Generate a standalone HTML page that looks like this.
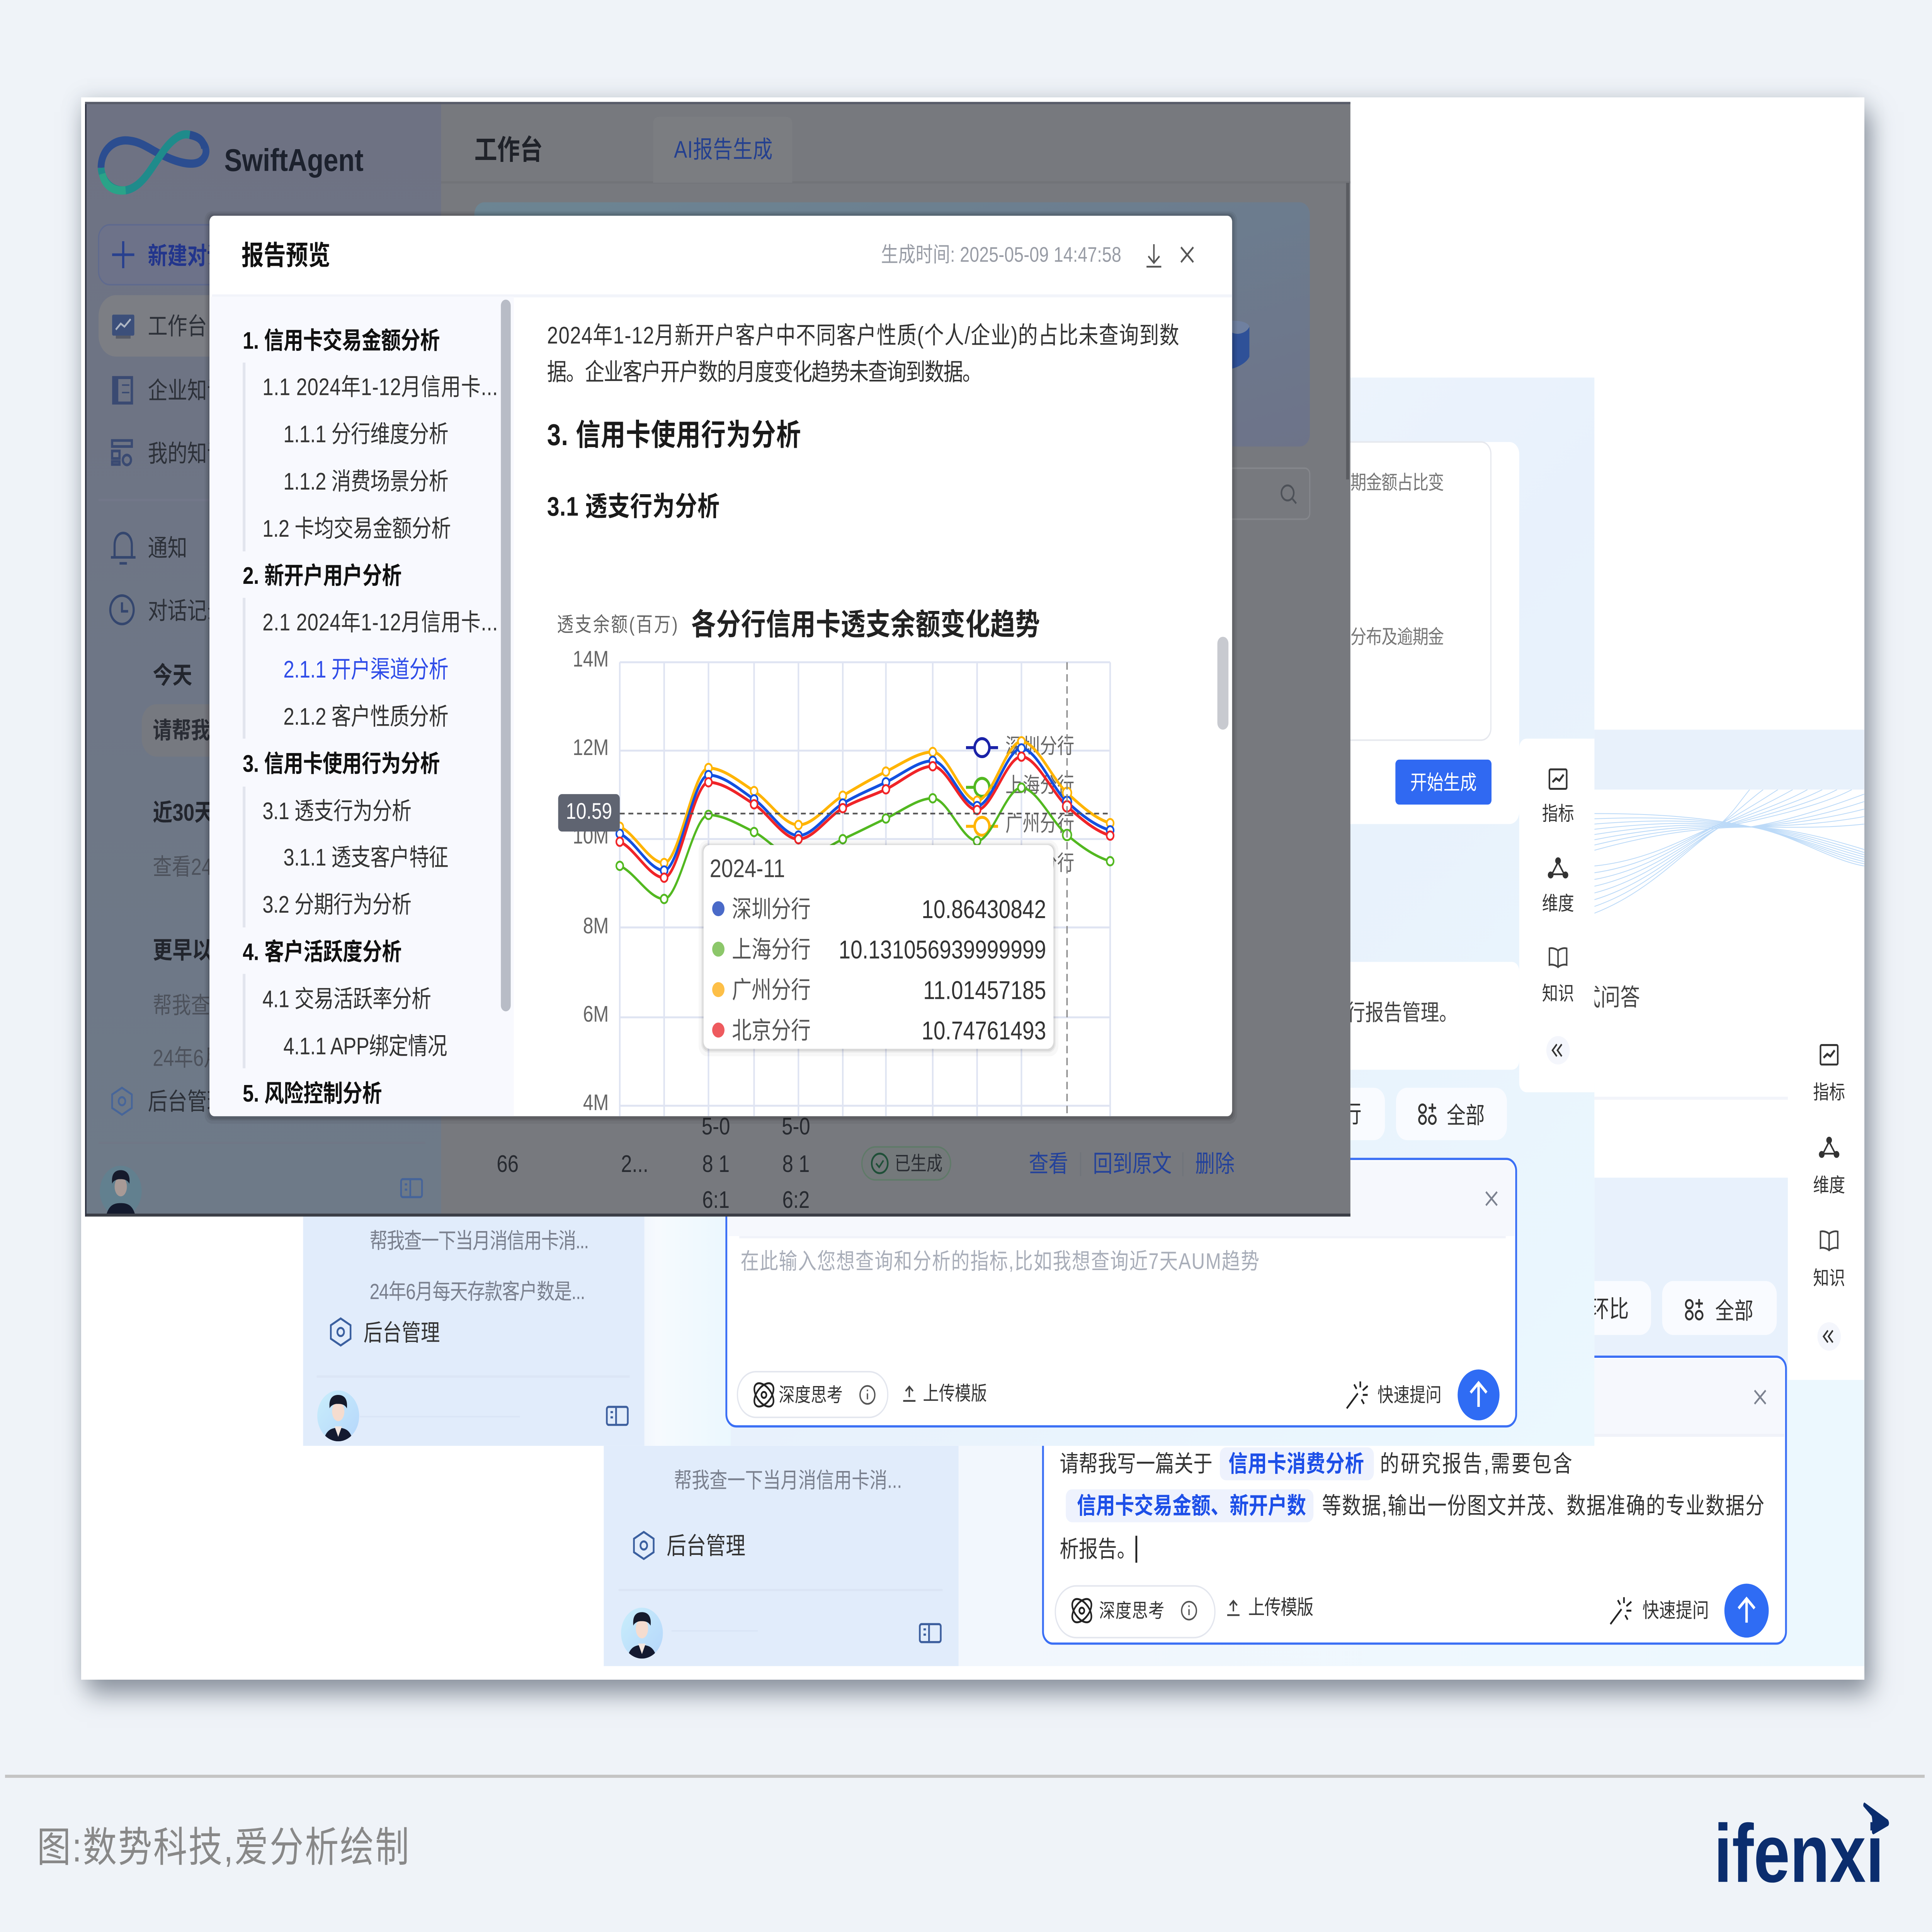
<!DOCTYPE html>
<html><head><meta charset="utf-8"><title>报告预览</title>
<style>
html,body{margin:0;padding:0;width:100%;height:100%;overflow:hidden;background:#eff3f8}
svg{display:block;position:absolute;left:0;top:0;width:100vw;height:100vh}
#card{position:absolute;left:4.209vw;top:5.041vh;width:92.283vw;height:81.894vh;background:#fff;box-shadow:.32vw .78vh 1.15vw rgba(90,100,115,.62),0 0 .9vw rgba(120,130,145,.25)}
#line{position:absolute;left:.255vw;width:99.36vw;top:91.86vh;height:.155vh;background:#c4c4c4}
#foot{top:91.5vh;height:8.5vh}
text{font-family:"Liberation Sans","Noto Sans CJK SC",sans-serif;dominant-baseline:central}
.b{font-weight:700}
</style></head><body>
<div id="card"></div>
<svg xmlns="http://www.w3.org/2000/svg" viewBox="0 0 1568 1289.48" preserveAspectRatio="none">
<defs>
<linearGradient id="m2" x1="0" y1="0" x2="1" y2="1"><stop offset="0" stop-color="#f4f8fe"/><stop offset=".55" stop-color="#e8f1fc"/><stop offset="1" stop-color="#ebf8fe"/></linearGradient>
<linearGradient id="m2b" x1="0" y1="0" x2="1" y2="0"><stop offset="0" stop-color="#f2f7fd"/><stop offset=".15" stop-color="#f6fafe"/><stop offset="1" stop-color="#ebf8fe"/></linearGradient>
<linearGradient id="m3" x1="0" y1="0" x2="1" y2="0"><stop offset="0" stop-color="#f2f7fd"/><stop offset="1" stop-color="#ecf8fe"/></linearGradient>
<linearGradient id="sb1" x1="0" y1="0" x2="0" y2="1"><stop offset="0" stop-color="#6e7283"/><stop offset="1" stop-color="#6e7a88"/></linearGradient>
<linearGradient id="hero" x1="0" y1="0" x2="1" y2="1"><stop offset="0" stop-color="#6c8593"/><stop offset="1" stop-color="#6d7389"/></linearGradient>
<linearGradient id="avg" x1="0" y1="0" x2="1" y2="1"><stop offset="0" stop-color="#c9eefb"/><stop offset="1" stop-color="#b5d6fb"/></linearGradient>
<clipPath id="c1"><rect x="69" y="68" width="1027" height="744"/></clipPath>
<clipPath id="wv"><rect x="1294" y="527" width="219" height="95"/></clipPath>
<clipPath id="mod"><rect x="170" y="144" width="830" height="601" rx="4"/></clipPath>
<clipPath id="avc"><circle r="17"/></clipPath>
<g id="av"><circle r="17" fill="url(#avg)"/><g clip-path="url(#avc)"><path d="M-12 17C-10 9-5 8 0 8C5 8 10 9 12 17Z" fill="#141a30"/><path d="M-3 7L0 14L3 7Z" fill="#f3e6df"/><ellipse cx="0" cy="-3" rx="5" ry="6.5" fill="#f5dccf"/><path d="M-7-5C-8-13-3-14 0-14C4-14 8-12 7-5C5-8 2-8-1-8C-3-8-6-7-7-5Z" fill="#151a2b"/></g></g>
<g id="hex" fill="none" stroke="#3a5f9f" stroke-width="1.4"><path d="M0-9L8-4.5V4.5L0 9L-8 4.5V-4.5Z"/><circle r="2.7"/></g>
<g id="bk" fill="none" stroke="#3d5f9e" stroke-width="1.4"><rect x="-8.5" y="-6" width="17" height="12" rx="1.5"/><path d="M-1-6V6M-5.5-2.5H-3.5M-5.5 1H-3.5"/></g>
<g id="ic1" fill="none" stroke="#333" stroke-width="1.3"><rect x="-7" y="-6.5" width="14" height="13" rx="1"/><path d="M-4.5 2L-1.5-.5L1 1L4.5-3" stroke-width="1.5"/></g>
<g id="ic2" fill="none" stroke="#333" stroke-width="1.2"><path d="M0-4L-5 4H5Z"/><circle cx="0" cy="-5" r="1.7" fill="#333"/><circle cx="-6" cy="4.5" r="1.7" fill="#333"/><circle cx="6" cy="4.5" r="1.7" fill="#333"/></g>
<g id="ic3" fill="none" stroke="#444" stroke-width="1.2"><path d="M0-4.5C-2-6-5-6.5-7-6V5C-5 4.5-2 5 0 6.5C2 5 5 4.5 7 5V-6C5-6.5 2-6 0-4.5V6.5"/></g>
<g id="ic4"><circle r="9.5" fill="#f4f6fc"/><path d="M-1-4L-4.5 0L-1 4M3-4L-.5 0L3 4" fill="none" stroke="#333" stroke-width="1.2"/></g>
<g id="atom" fill="none" stroke="#222" stroke-width="1.3"><ellipse rx="9.5" ry="5.5" transform="rotate(45)"/><ellipse rx="9.5" ry="5.5" transform="rotate(-45)"/><circle r="2"/></g>
<g id="info" fill="none" stroke="#555" stroke-width="1.1"><circle r="6"/><path d="M0-1V3M0-3.5V-2.5"/></g>
<g id="upl" fill="none" stroke="#444" stroke-width="1.2"><path d="M0 2.5V-4M-3-1.5L0-4.5L3-1.5M-5 5H5"/></g>
<g id="wand" fill="none" stroke="#222" stroke-width="1.3"><path d="M-8 9L1-1M3-9V-5M-2-7L0-4M9-6L5-3M5 0H9M4 3L6 6"/></g>
<g id="up"><path d="M0 8V-8M-6.5-1.5L0-8L6.5-1.5" fill="none" stroke="#fff" stroke-width="2"/></g>
<g id="pall" fill="none" stroke="#333" stroke-width="1.4"><circle cx="-4" cy="-3.5" r="2.8"/><circle cx="-4" cy="3.8" r="2.8"/><circle cx="4" cy="3.8" r="2.8"/><path d="M4-7V-1M1-4H7"/></g>
<g id="xx" fill="none" stroke="#7c8290" stroke-width="1.3"><path d="M-4.5-4.5L4.5 4.5M4.5-4.5L-4.5 4.5"/></g>
</defs>

<!-- LAYER 3 -->
<rect x="490" y="965" width="288" height="147" fill="#e1ecfb"/>
<rect x="778" y="900" width="735" height="212" fill="url(#m3)"/>
<rect x="1294" y="487" width="219" height="40" fill="#e8f1fb"/>
<rect x="1294" y="527" width="219" height="259" fill="#fff"/>
<rect x="1451" y="527" width="62" height="394" fill="#fff"/>
<g clip-path="url(#wv)" fill="none" stroke="#bcdaf8" stroke-width=".55">
<path d="M1294 543C1340 543 1380 545 1422 552C1455 557 1485 574 1513 578"/>
<path d="M1294 546.5C1340 545 1380 546 1422 552C1455 557 1485 572 1513 576.5"/>
<path d="M1294 550C1340 547 1380 547 1422 552C1455 557 1485 570 1513 575"/>
<path d="M1294 553.5C1340 549 1380 548 1422 552C1455 557 1485 568 1513 573.5"/>
<path d="M1294 557C1340 551 1380 549 1422 552C1455 556 1485 566 1513 572"/>
<path d="M1294 560.5C1340 553 1380 550 1422 552C1455 555 1485 564 1513 570.5"/>
<path d="M1294 564C1340 555 1380 551 1422 552C1455 554 1485 562 1513 569"/>
<path d="M1294 567.5C1340 557 1380 552 1422 552C1455 553 1485 560 1513 567"/>
<path d="M1294 578C1340 574 1370 558 1396 550C1405 544 1412 535 1420 527"/>
<path d="M1294 582.5C1340 577 1370 559 1396 550C1407 544 1418 535 1431 527"/>
<path d="M1294 587C1340 580 1370 560 1396 550C1410 544 1428 535 1443 527"/>
<path d="M1294 591.5C1340 583 1370 561 1396 551C1412 545 1438 535 1455 527"/>
<path d="M1294 596C1340 586 1370 562 1396 551C1415 545 1448 536 1467 527"/>
<path d="M1294 600.5C1340 589 1370 563 1396 552C1418 546 1458 536 1479 527"/>
<path d="M1294 605C1340 592 1370 564 1396 552C1420 547 1468 537 1491 527"/>
<path d="M1294 609.5C1340 595 1370 565 1396 552C1425 548 1478 538 1503 527"/>
<path d="M1420 552C1450 548 1480 540 1513 530"/>
<path d="M1420 552C1450 549 1480 544 1513 535"/>
<path d="M1420 552C1450 550 1480 547 1513 540"/>
<path d="M1420 552C1450 551 1480 550 1513 545"/>
<path d="M1420 552C1450 552 1480 553 1513 550"/>
</g>
<text x="1331" y="666" font-size="16" fill="#444" text-anchor="end">式问答</text>
<rect x="1294" y="732" width="157" height="2" fill="#f2f4fa"/>
<rect x="1294" y="786" width="157" height="125" fill="#e8f1fc"/>
<rect x="1260" y="855" width="80" height="36" rx="9" fill="#f9fbff"/>
<text x="1290" y="874" font-size="16" fill="#333">环比</text>
<rect x="1349" y="855" width="93" height="36" rx="9" fill="#f9fbff"/>
<use href="#pall" x="1375" y="874"/>
<text x="1392" y="875" font-size="15.5" fill="#333">全部</text>
<use href="#ic1" x="1484.5" y="704"/><text x="1484.5" y="729" font-size="13" fill="#333" text-anchor="middle">指标</text>
<use href="#ic2" x="1484.5" y="766"/><text x="1484.5" y="791" font-size="13" fill="#333" text-anchor="middle">维度</text>
<use href="#ic3" x="1484.5" y="828"/><text x="1484.5" y="853" font-size="13" fill="#333" text-anchor="middle">知识</text>
<use href="#ic4" x="1484.5" y="892"/>

<rect x="846.5" y="905.5" width="603" height="191.5" rx="8" fill="#fff" stroke="#3a6ff5" stroke-width="1.5"/>
<path d="M848 957V913Q848 907 854 907H1442Q1448 907 1448 913V957Z" fill="#f6f8fd"/>
<use href="#xx" x="1428.5" y="932.5"/>
<rect x="848" y="957" width="600" height="2" fill="#f0f2f9"/>
<text x="860" y="977" font-size="15.5" fill="#333" textLength="124">请帮我写一篇关于</text>
<rect x="990" y="966" width="125" height="22" rx="5" fill="#eef2fd"/>
<text x="997" y="977" font-size="15.5" fill="#1d4fe8" class="b" textLength="110">信用卡消费分析</text>
<text x="1120" y="977" font-size="15.5" fill="#333" textLength="156">的研究报告,需要包含</text>
<rect x="865" y="994" width="201" height="22" rx="5" fill="#eef2fd"/>
<text x="874" y="1005" font-size="15.5" fill="#1d4fe8" class="b" textLength="186">信用卡交易金额、新开户数</text>
<text x="1073" y="1005" font-size="15.5" fill="#333" textLength="359">等数据,输出一份图文并茂、数据准确的专业数据分</text>
<text x="860" y="1034" font-size="15.5" fill="#333">析报告。</text>
<rect x="921.5" y="1025" width="1.5" height="18" fill="#222"/>
<rect x="856.5" y="1058.5" width="129.5" height="34.5" rx="17" fill="#fff" stroke="#e3e6ee"/>
<use href="#atom" x="878" y="1075"/>
<text x="892" y="1075" font-size="13" fill="#333" textLength="53">深度思考</text>
<use href="#info" x="965" y="1075"/>
<use href="#upl" x="1001" y="1073"/>
<text x="1013" y="1073" font-size="13.5" fill="#333" textLength="53">上传模版</text>
<use href="#wand" x="1315" y="1075"/>
<text x="1333" y="1075" font-size="13.5" fill="#333" textLength="54">快速提问</text>
<circle cx="1417.5" cy="1075" r="18" fill="#2f6cf4"/><use href="#up" x="1417.5" y="1075"/>

<text x="547" y="988" font-size="14.5" fill="#7a808e" textLength="185">帮我查一下当月消信用卡消...</text>
<use href="#hex" x="522.5" y="1031.5"/>
<text x="541" y="1032" font-size="16" fill="#333">后台管理</text>
<rect x="502" y="1060.5" width="263" height="1.5" fill="#dbe5f5"/>
<rect x="545" y="1088" width="70" height="1" fill="#dae5f6"/>
<use href="#av" x="521" y="1090"/>
<use href="#bk" x="755" y="1090"/>

<!-- LAYER 2 -->
<rect x="246" y="252" width="277" height="713" fill="#e1ecfb"/>
<rect x="523" y="252" width="771" height="713" fill="url(#m2)"/>
<rect x="523" y="773" width="70" height="192" fill="url(#m2b)"/>
<rect x="523" y="295" width="710" height="255" rx="8" fill="#fff"/>
<rect x="500" y="295" width="710" height="199" rx="8" fill="#fff" stroke="#e6e8ee" stroke-width="1"/>
<text x="1096" y="322" font-size="13" fill="#777" textLength="76">期金额占比变</text>
<text x="1096" y="425" font-size="13" fill="#777" textLength="76">分布及逾期金</text>
<rect x="1132.5" y="507" width="78" height="30" rx="3" fill="#3069f2"/>
<text x="1171.5" y="522.5" font-size="13.5" fill="#fff" text-anchor="middle">开始生成</text>
<rect x="523" y="642" width="710" height="72" rx="6" fill="#fff"/>
<text x="1093" y="676" font-size="15" fill="#444">行报告管理。</text>
<rect x="1040" y="726" width="84" height="35" rx="9" fill="#f9fbff"/>
<text x="1089" y="744" font-size="16" fill="#333">行</text>
<rect x="1133" y="726" width="90" height="35" rx="9" fill="#f9fbff"/>
<use href="#pall" x="1158.5" y="743.5"/>
<text x="1174" y="744.5" font-size="15.5" fill="#333">全部</text>
<rect x="1233" y="493" width="61" height="236" rx="6" fill="#fff"/>
<rect x="1250" y="493" width="44" height="236" fill="#fff"/>
<use href="#ic1" x="1264.5" y="520"/><text x="1264.5" y="543" font-size="13" fill="#333" text-anchor="middle">指标</text>
<use href="#ic2" x="1264.5" y="579.5"/><text x="1264.5" y="603" font-size="13" fill="#333" text-anchor="middle">维度</text>
<use href="#ic3" x="1264.5" y="639"/><text x="1264.5" y="663" font-size="13" fill="#333" text-anchor="middle">知识</text>
<use href="#ic4" x="1264.5" y="701"/>

<rect x="589.5" y="773.5" width="641" height="178.5" rx="8" fill="#fff" stroke="#3a6ff5" stroke-width="1.5"/>
<path d="M591 825V781Q591 775 597 775H1223Q1229 775 1229 781V825Z" fill="#f6f8fd"/>
<use href="#xx" x="1210.5" y="800"/>
<rect x="600" y="825" width="622" height="1.5" fill="#f0f2f9"/>
<text x="601" y="842" font-size="15" fill="#a9aeb9" textLength="421">在此输入您想查询和分析的指标,比如我想查询近7天AUM趋势</text>
<rect x="598.5" y="915.5" width="122" height="30.5" rx="15" fill="#fff" stroke="#e3e6ee"/>
<use href="#atom" x="620" y="931"/>
<text x="632" y="931" font-size="13" fill="#333" textLength="52">深度思考</text>
<use href="#info" x="704" y="931"/>
<use href="#upl" x="738" y="930"/>
<text x="749" y="930" font-size="13" fill="#333" textLength="52">上传模版</text>
<use href="#wand" x="1101" y="931"/>
<text x="1118" y="931" font-size="13" fill="#333" textLength="52">快速提问</text>
<circle cx="1200" cy="931" r="17" fill="#2f6cf4"/><use href="#up" x="1200" y="931"/>

<text x="300" y="828" font-size="14.5" fill="#7a808e" textLength="178">帮我查一下当月消信用卡消...</text>
<text x="300" y="862" font-size="14.5" fill="#7a808e" textLength="175">24年6月每天存款客户数是...</text>
<use href="#hex" x="276.5" y="889"/>
<text x="295" y="889.5" font-size="15.5" fill="#333">后台管理</text>
<rect x="257" y="918" width="254" height="1.5" fill="#dbe5f5"/>
<rect x="292" y="945" width="130" height="1" fill="#dae5f6"/>
<use href="#av" x="274.5" y="945"/>
<use href="#bk" x="501" y="945"/>

<!-- LAYER 1 -->
<g clip-path="url(#c1)">
<rect x="69" y="68" width="1027" height="744" fill="#77797e"/>
<rect x="69" y="68" width="289" height="744" fill="url(#sb1)"/>
<rect x="358" y="121" width="738" height="1.5" fill="#717378"/>
<path d="M530 122V83Q530 78 535 78H638Q643 78 643 83V122Z" fill="#7b7d81"/>
<text x="385" y="100" font-size="18.5" fill="#1f2229" class="b">工作台</text>
<text x="547" y="100" font-size="16" fill="#24408f" textLength="80">AI报告生成</text>
<rect x="385" y="135" width="678" height="163" rx="8" fill="url(#hero)"/>
<path d="M1000 222C1005 224 1012 222 1014 218V238C1012 242 1005 245 1000 246Z" fill="#2f5198"/>
<path d="M1000 214C1006 214 1013 215 1014 218C1012 222 1005 224 1000 222Z" fill="#6f80a0"/>
<rect x="960" y="312.5" width="103" height="34" rx="4" fill="#77797e" stroke="#85878c"/>
<g fill="none" stroke="#4d5158" stroke-width="1.3"><circle cx="1045" cy="329" r="5"/><path d="M1049 333L1052 336"/></g>
<rect x="1092.5" y="122" width="2.5" height="198" fill="#5a5c61"/>

<path d="M82 112C82 100 93 92 106 94C116 95 124 101 133 104C143 108 155 111 162 108C168 105 169 99 164 95" fill="none" stroke="#2b4d90" stroke-width="5.5"/>
<path d="M82 112C83 122 92 128 102 127C115 125 122 113 130 104C137 95 146 88 154 90" fill="none" stroke="#1f8b8b" stroke-width="5.5"/>
<path d="M83 116C85 124 92 128 102 127" fill="none" stroke="#2aa388" stroke-width="5.5"/>
<path d="M154 90C160 91 165 93 166 99" fill="none" stroke="#2a4b8d" stroke-width="5.5"/>
<text x="182" y="107" font-size="21" fill="#1c212d" class="b" textLength="113" lengthAdjust="spacingAndGlyphs">SwiftAgent</text>

<rect x="80" y="150" width="150" height="40" rx="9" fill="#6d7289" stroke="#5f6a8e" stroke-width="1"/>
<path d="M100 161V179M91 170H109" stroke="#28408f" stroke-width="1.8" fill="none"/>
<text x="120" y="171" font-size="16" fill="#22358c" class="b">新建对话</text>
<rect x="80" y="197" width="200" height="41" rx="14" fill="#7c7e84"/>
<rect x="91" y="210" width="18" height="14" rx="1" fill="#3c4f7a"/><path d="M94 220L98 216L101 218L106 213" stroke="#aeb6c4" fill="none" stroke-width="1.3"/><rect x="94" y="224" width="12" height="2" fill="#565a66"/>
<text x="120" y="218" font-size="16" fill="#2c3038">工作台</text>
<rect x="92" y="252" width="15" height="17" fill="none" stroke="#3a4a72" stroke-width="2"/><rect x="92" y="252" width="4" height="17" fill="#3a4a72"/><path d="M99 257H105M99 262H105" stroke="#3a4a72"/>
<text x="120" y="261" font-size="16" fill="#2c3038">企业知识库</text>
<g fill="none" stroke="#3a4a72" stroke-width="1.8"><rect x="91" y="294" width="16" height="4"/><rect x="91" y="301" width="6" height="5"/><rect x="91" y="308" width="6" height="2"/><circle cx="103" cy="307" r="3.3"/></g>
<text x="120" y="303" font-size="16" fill="#2c3038">我的知识库</text>
<rect x="80" y="333" width="260" height="1.5" fill="#727789"/>
<path d="M93 372V364C93 353 107 353 107 364V372M90 372H110M97 376H103" fill="none" stroke="#34466e" stroke-width="1.7"/>
<text x="120" y="366" font-size="16" fill="#2c3038">通知</text>
<g fill="none" stroke="#34466e" stroke-width="1.7"><circle cx="99" cy="407" r="9.5"/><path d="M99 402V408H104"/></g>
<text x="120" y="408" font-size="16" fill="#2c3038">对话记录</text>
<text x="124" y="451" font-size="16" fill="#22252d" class="b">今天</text>
<rect x="115" y="470" width="220" height="35" rx="12" fill="#767980"/>
<text x="124" y="487.5" font-size="15.5" fill="#2a2d35" class="b">请帮我写一篇</text>
<text x="124" y="542.5" font-size="16" fill="#22252d" class="b">近30天</text>
<text x="124" y="578.5" font-size="15.5" fill="#4d525c">查看24年</text>
<text x="124" y="634.5" font-size="16" fill="#22252d" class="b">更早以前</text>
<text x="124" y="671" font-size="15.5" fill="#4d525c">帮我查一下</text>
<text x="124" y="706" font-size="15.5" fill="#4d525c">24年6月</text>
<use href="#hex" x="99" y="735" style="opacity:.75"/>
<text x="120" y="735.5" font-size="16" fill="#2c3038">后台管理</text>
<rect x="80" y="762" width="265" height="1.5" fill="#707786"/>
<circle cx="98" cy="795" r="17" fill="#62808f"/>
<g transform="translate(98 795)"><path d="M-12 17C-10 9-5 8 0 8C5 8 10 9 12 17Z" fill="#141a2e"/><ellipse cx="0" cy="-3" rx="5" ry="6.5" fill="#a89a96"/><path d="M-7-5C-8-13-3-14 0-14C4-14 8-12 7-5C5-8 2-8-1-8C-3-8-6-7-7-5Z" fill="#151a2b"/></g>
<use href="#bk" x="334" y="793" style="opacity:.8"/>

<text x="412" y="777" font-size="16" fill="#272a30" text-anchor="middle">66</text>
<text x="504" y="777" font-size="16" fill="#272a30">2...</text>
<g font-size="16" fill="#272a30" text-anchor="middle">
<text x="581" y="752">5-0</text><text x="581" y="777">8 1</text><text x="581" y="801">6:1</text>
<text x="646" y="752">5-0</text><text x="646" y="777">8 1</text><text x="646" y="801">6:2</text>
</g>
<rect x="699.5" y="765.5" width="72" height="22" rx="11" fill="#74797b" stroke="#5f7a68"/>
<circle cx="714" cy="776.5" r="6.5" fill="none" stroke="#1f4f38" stroke-width="1.3"/><path d="M711 776.5L713.5 779L717 774.5" fill="none" stroke="#1f4f38" stroke-width="1.2"/>
<text x="726" y="776.5" font-size="13" fill="#2a2d33">已生成</text>
<g font-size="16" fill="#24429a"><text x="835" y="777">查看</text><text x="887" y="777">回到原文</text><text x="970" y="777">删除</text></g>
<path d="M877 769V785M960 769V785" stroke="#70747a"/>
<rect x="69" y="810" width="1027" height="2" fill="#3b3e46"/>
<rect x="69" y="68" width="1.2" height="744" fill="#2f3443"/>
<rect x="69" y="68" width="1027" height="1.5" fill="#565a68"/>

<!-- MODAL -->
<g fill="#000"><rect x="166" y="141" width="838" height="609" rx="6" opacity=".05"/><rect x="167.5" y="142" width="835" height="606" rx="5" opacity=".07"/><rect x="169" y="143" width="832" height="604" rx="4" opacity=".1"/></g>
<rect x="170" y="144" width="830" height="601" rx="4" fill="#fff"/>
<g clip-path="url(#mod)">
<text x="196" y="170.5" font-size="18" fill="#111" class="b" textLength="72">报告预览</text>
<text x="715" y="170" font-size="14" fill="#989ca5" textLength="195">生成时间: 2025-05-09 14:47:58</text>
<path d="M936.5 163V175M932 171L936.5 175.5L941 171M930.5 178H942.5" fill="none" stroke="#555" stroke-width="1.2"/>
<path d="M958.5 165L968.5 175M968.5 165L958.5 175" fill="none" stroke="#555" stroke-width="1.3"/>
<rect x="172" y="196.5" width="828" height="2" fill="#f2f4fa"/>
<rect x="170" y="198" width="247" height="547" fill="#f8f9fe"/>
<rect x="406.5" y="200" width="8" height="475" rx="4" fill="#b8bcc6"/>
<g fill="#e2e5ee"><rect x="197" y="242" width="2.2" height="126"/><rect x="197" y="399" width="2.2" height="94"/><rect x="197" y="525" width="2.2" height="94"/><rect x="197" y="650" width="2.2" height="63"/></g>
<g font-size="16" fill="#333">
<text x="197" y="227.5" fill="#111" class="b" textLength="160">1. 信用卡交易金额分析</text>
<text x="213" y="258.5" textLength="191">1.1 2024年1-12月信用卡...</text>
<text x="230" y="290" textLength="134">1.1.1 分行维度分析</text>
<text x="230" y="321.5" textLength="134">1.1.2 消费场景分析</text>
<text x="213" y="353" textLength="153">1.2 卡均交易金额分析</text>
<text x="197" y="384.5" fill="#111" class="b" textLength="129">2. 新开户用户分析</text>
<text x="213" y="415.5" textLength="191">2.1 2024年1-12月信用卡...</text>
<text x="230" y="447" fill="#2f4ce8" textLength="134">2.1.1 开户渠道分析</text>
<text x="230" y="478.5" textLength="134">2.1.2 客户性质分析</text>
<text x="197" y="510" fill="#111" class="b" textLength="160">3. 信用卡使用行为分析</text>
<text x="213" y="541.5" textLength="121">3.1 透支行为分析</text>
<text x="230" y="572.5" textLength="134">3.1.1 透支客户特征</text>
<text x="213" y="604" textLength="121">3.2 分期行为分析</text>
<text x="197" y="635.5" fill="#111" class="b" textLength="129">4. 客户活跃度分析</text>
<text x="213" y="667" textLength="137">4.1 交易活跃率分析</text>
<text x="230" y="698.5" textLength="133">4.1.1 APP绑定情况</text>
<text x="197" y="730" fill="#111" class="b" textLength="113">5. 风险控制分析</text>
</g>
<text x="444" y="224" font-size="16" fill="#333" textLength="513">2024年1-12月新开户客户中不同客户性质(个人/企业)的占比未查询到数</text>
<text x="444" y="248.5" font-size="16" fill="#333" textLength="353">据。企业客户开户数的月度变化趋势未查询到数据。</text>
<text x="444" y="290.5" font-size="20" fill="#1a1a1a" class="b" textLength="206">3. 信用卡使用行为分析</text>
<text x="444" y="338" font-size="18" fill="#1a1a1a" class="b" textLength="140">3.1 透支行为分析</text>
<rect x="988" y="425" width="9" height="62" rx="4.5" fill="#c8cad0"/>

<text x="452" y="417" font-size="13.5" fill="#666" textLength="98">透支余额(百万)</text>
<text x="561" y="417" font-size="20" fill="#222" class="b" textLength="283">各分行信用卡透支余额变化趋势</text>
<g stroke="#dfe4f2" stroke-width="1.3" fill="none">
<path d="M503 442H901M503 501H901M503 560H901M503 619H901M503 679H901M503 738H901"/>
<path d="M503 442V745M539 442V745M575 442V745M612 442V745M648 442V745M684 442V745M719 442V745M757 442V745M793 442V745M829 442V745M901 442V745"/>
</g>
<g font-size="15" fill="#666" text-anchor="end">
<text x="494" y="440">14M</text><text x="494" y="499">12M</text><text x="494" y="558">10M</text><text x="494" y="618">8M</text><text x="494" y="677">6M</text><text x="494" y="736">4M</text>
</g>
<g fill="none" stroke-width="2">
<path d="M784 499H810" stroke="#1a22a8"/><circle cx="797" cy="499" r="6" fill="#fff" stroke="#1a22a8"/>
<path d="M784 525.5H810" stroke="#52b820"/><circle cx="797" cy="525.5" r="6" fill="#fff" stroke="#52b820"/>
<path d="M784 551.5H810" stroke="#ffb400"/><circle cx="797" cy="551.5" r="6" fill="#fff" stroke="#ffb400"/>
</g>
<g font-size="14" fill="#666"><text x="816" y="498">深圳分行</text><text x="816" y="524">上海分行</text><text x="816" y="550">广州分行</text><text x="816" y="576">北京分行</text></g>

<g fill="none" stroke-width="1.7">
<path stroke="#52b820" d="M503,577.9 C515,581.9 527,600 539,600 C551,600 563,543.9 575,543.9 C587,543.9 600,550.4 612,555.3 C624,560.2 636,573.2 648,573.2 C660,573.2 672,564.6 684,560.1 C696,555.6 707,550.9 719,546.3 C731,541.7 745,532.8 757,532.8 C769,532.8 781,561.3 793,561.3 C805,561.3 817,525.7 829,525.7 C841,525.7 854,549.1 866,557.3 C878,565.5 889,571.8 901,574.8"/>
<path stroke="#ffb400" stroke-width="2" d="M503,551.8 C515,555.8 527,576 539,576 C551,576 563,512.6 575,512.6 C587,512.6 600,521.7 612,528 C624,534.3 636,550.6 648,550.6 C660,550.6 672,537 684,531.1 C696,525.2 707,519.9 719,515 C731,510.1 745,501.9 757,501.9 C769,501.9 781,534.4 793,534.4 C805,534.4 817,494.8 829,494.8 C841,494.8 854,520.1 866,529.2 C878,538.3 889,546.4 901,549.4"/>
<path stroke="#1250e0" stroke-width="2" d="M503,556.5 C515,560.5 527,581 539,581 C551,581 563,517.3 575,517.3 C587,517.3 600,526.8 612,533.5 C624,540.2 636,557.7 648,557.7 C660,557.7 672,542.2 684,536.3 C696,530.4 707,526.9 719,522.1 C731,517.3 745,507.8 757,507.8 C769,507.8 781,538 793,538 C805,538 817,499.5 829,499.5 C841,499.5 854,526.1 866,535.2 C878,544.3 889,551.2 901,554.2"/>
<path stroke="#f02428" stroke-width="2" d="M503,561.8 C515,565.8 527,585.8 539,585.8 C551,585.8 563,522.1 575,522.1 C587,522.1 600,530.5 612,536.8 C624,543.1 636,560.1 648,560.1 C660,560.1 672,545 684,539.4 C696,533.8 707,531.5 719,526.8 C731,522.1 745,511.4 757,511.4 C769,511.4 781,540.6 793,540.6 C805,540.6 817,505 829,505 C841,505 854,529.4 866,538.2 C878,547 889,554.7 901,557.7"/>
</g>
<g fill="#fff" stroke-width="1.3">
<g stroke="#52b820"><circle cx="503" cy="577.9" r="2.8"/><circle cx="539" cy="600" r="2.8"/><circle cx="575" cy="543.9" r="2.8"/><circle cx="612" cy="555.3" r="2.8"/><circle cx="684" cy="560.1" r="2.8"/><circle cx="719" cy="546.3" r="2.8"/><circle cx="757" cy="532.8" r="2.8"/><circle cx="793" cy="561.3" r="2.8"/><circle cx="829" cy="525.7" r="2.8"/><circle cx="866" cy="557.3" r="3.5"/><circle cx="901" cy="574.8" r="2.8"/></g>
<g stroke="#ffb400"><circle cx="503" cy="551.8" r="2.8"/><circle cx="539" cy="576" r="2.8"/><circle cx="575" cy="512.6" r="2.8"/><circle cx="612" cy="528" r="2.8"/><circle cx="648" cy="550.6" r="2.8"/><circle cx="684" cy="531.1" r="2.8"/><circle cx="719" cy="515" r="2.8"/><circle cx="757" cy="501.9" r="2.8"/><circle cx="793" cy="534.4" r="2.8"/><circle cx="829" cy="494.8" r="2.8"/><circle cx="866" cy="529.2" r="3.5"/><circle cx="901" cy="549.4" r="2.8"/></g>
<g stroke="#1250e0"><circle cx="503" cy="556.5" r="2.8"/><circle cx="539" cy="581" r="2.8"/><circle cx="575" cy="517.3" r="2.8"/><circle cx="612" cy="533.5" r="2.8"/><circle cx="648" cy="557.7" r="2.8"/><circle cx="684" cy="536.3" r="2.8"/><circle cx="719" cy="522.1" r="2.8"/><circle cx="757" cy="507.8" r="2.8"/><circle cx="793" cy="538" r="2.8"/><circle cx="829" cy="499.5" r="2.8"/><circle cx="866" cy="535.2" r="3.5"/><circle cx="901" cy="554.2" r="2.8"/></g>
<g stroke="#f02428"><circle cx="503" cy="561.8" r="2.8"/><circle cx="539" cy="585.8" r="2.8"/><circle cx="575" cy="522.1" r="2.8"/><circle cx="612" cy="536.8" r="2.8"/><circle cx="648" cy="560.1" r="2.8"/><circle cx="684" cy="539.4" r="2.8"/><circle cx="719" cy="526.8" r="2.8"/><circle cx="757" cy="511.4" r="2.8"/><circle cx="793" cy="540.6" r="2.8"/><circle cx="829" cy="505" r="2.8"/><circle cx="866" cy="538.2" r="3.5"/><circle cx="901" cy="557.7" r="2.8"/></g>
</g>
<path d="M503 543H901" stroke="#555" stroke-width="1.1" stroke-dasharray="4 3" fill="none"/>
<path d="M866 442V745" stroke="#888" stroke-width="1.1" stroke-dasharray="5 3" fill="none"/>
<rect x="453" y="530" width="50" height="25" rx="3" fill="#5f6471"/>
<text x="478" y="541.5" font-size="15" fill="#fff" text-anchor="middle">10.59</text>
<g fill="#000"><rect x="567" y="561" width="292" height="144" rx="7" opacity=".03"/><rect x="569" y="562.5" width="288" height="140" rx="6" opacity=".05"/><rect x="570" y="563.5" width="286" height="138" rx="5" opacity=".07"/></g>
<rect x="571" y="564" width="284" height="136" rx="5" fill="#fff"/>
<text x="576" y="579.5" font-size="17" fill="#444">2024-11</text>
<circle cx="583" cy="606.5" r="5" fill="#4a6ac8"/><circle cx="583" cy="633.5" r="5" fill="#8cc76a"/><circle cx="583" cy="660.5" r="5" fill="#fdbf47"/><circle cx="583" cy="687.5" r="5" fill="#ee5a5e"/>
<g font-size="16" fill="#555"><text x="594" y="607">深圳分行</text><text x="594" y="634">上海分行</text><text x="594" y="661">广州分行</text><text x="594" y="688">北京分行</text></g>
<g font-size="17.3" fill="#333" text-anchor="end" style="font-weight:500"><text x="849" y="607">10.86430842</text><text x="849" y="634">10.131056939999999</text><text x="849" y="661">11.01457185</text><text x="849" y="688">10.74761493</text></g>
</g>
</g>
</svg>

<div id="line"></div>
<svg id="foot" xmlns="http://www.w3.org/2000/svg" viewBox="0 1179.83 1568 109.65" preserveAspectRatio="none">
<text x="30" y="1233" font-size="27.5" fill="#888" textLength="302">图:数势科技,爱分析绘制</text>
<text x="1391" y="1256" font-size="55" fill="#0b2d6e" class="b" style="dominant-baseline:alphabetic" textLength="138" lengthAdjust="spacingAndGlyphs">ifenxi</text>
<path d="M1513.2 1203L1532.2 1214.5Q1533.8 1216.8 1532.5 1218.5L1520.5 1224.3Q1519 1224 1519.3 1221.5Q1520 1215 1519 1212L1512.3 1205.5Q1512 1203.5 1513.2 1203Z" fill="#0b2d6e"/>
</svg>
</body></html>
